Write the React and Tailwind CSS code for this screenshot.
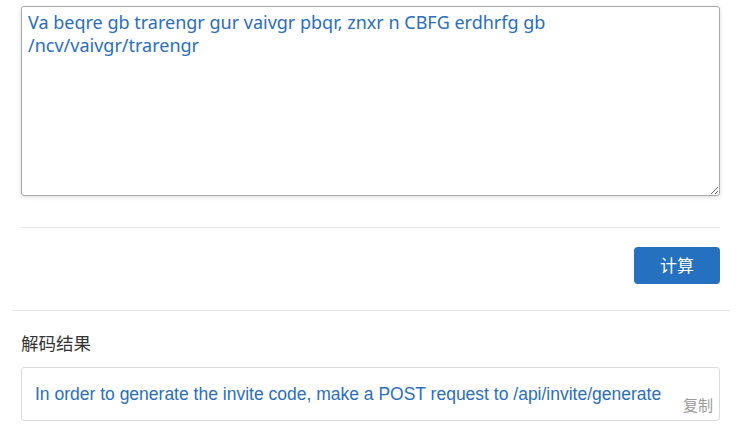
import React from "react";

export default function App() {
  const text = "Va beqre gb trarengr gur vaivgr pbqr, znxr n CBFG erdhrfg gb\n/ncv/vaivgr/trarengr";
  return (
    <div className="w-[740px] h-[433px] bg-white overflow-hidden" style={{ fontFamily: '"Noto Sans", "Noto Sans CJK SC", sans-serif' }}>
      <div className="pl-[21px] pt-[6px]">
        <textarea
          readOnly
          value={text}
          style={{ fontFamily: '"Noto Sans", "Noto Sans CJK SC", sans-serif' }}
          className="block w-[699px] h-[190px] border border-[#a9a9a9] rounded-[3px] shadow-[0_1px_4px_rgba(0,0,0,0.15)] px-[6px] pt-[4px] pb-[3px] text-[18px] leading-[23px] text-[#2a6ebd] resize-y outline-none"
        />
        <div className="mt-[31px] h-px w-[699px] bg-[#e5e5e5]" />
        <div className="w-[699px] flex justify-end mt-[19px]">
          <button className="w-[86px] h-[37px] rounded-[4px] bg-[#2571bf] text-white text-[17px]">计算</button>
        </div>
      </div>
      <div className="ml-[12px] mt-[26px] w-[718px] h-px bg-[#e5e5e5]" />
      <div className="pl-[21px]">
        <div className="mt-[20px] text-[17.5px] leading-[24px] text-[#333]">解码结果</div>
        <div className="mt-[12px] w-[699px] h-[54px] border border-[#dcdcdc] rounded-[3px] relative">
          <div
            className="pl-[13px] pt-[14px] text-[17.5px] leading-[24px] text-[#2a6ebd]"
            style={{ fontFamily: '"Liberation Sans", Arial, sans-serif' }}
          >
            In order to generate the invite code, make a POST request to /api/invite/generate
          </div>
          <span className="absolute right-[6px] bottom-[6px] text-[15px] leading-[18px] text-[#999]">复制</span>
        </div>
      </div>
    </div>
  );
}
